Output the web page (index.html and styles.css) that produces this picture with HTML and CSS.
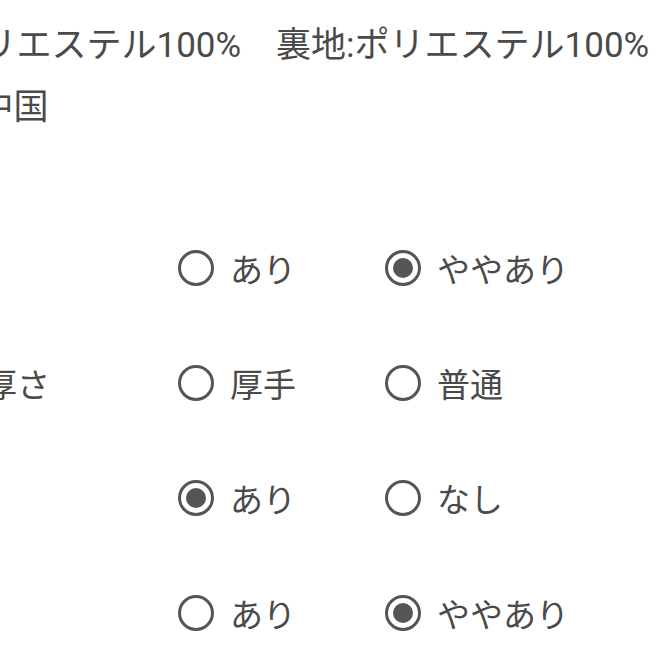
FILE: index.html
```html
<!DOCTYPE html>
<html lang="ja">
<head>
<meta charset="utf-8">
<link rel="stylesheet" href="styles.css">
</head>
<body>
<div class="spec">
  <p class="line line-material">表地:ポリエステル100%　裏地:ポリエステル100%</p>
  <p class="line line-origin">原産国:中国</p>
</div>
<div class="attrs">
  <div class="row">
    <div class="label">透け感</div>
    <div class="opt"><span class="radio"></span><span>あり</span></div>
    <div class="opt"><span class="radio on"></span><span>ややあり</span></div>
    <div class="opt"><span class="radio"></span><span>なし</span></div>
  </div>
  <div class="row">
    <div class="label">生地の厚さ</div>
    <div class="opt"><span class="radio"></span><span>厚手</span></div>
    <div class="opt"><span class="radio"></span><span>普通</span></div>
    <div class="opt"><span class="radio"></span><span>薄手</span></div>
  </div>
  <div class="row">
    <div class="label">伸縮性</div>
    <div class="opt"><span class="radio on"></span><span>あり</span></div>
    <div class="opt"><span class="radio"></span><span>なし</span></div>
  </div>
  <div class="row">
    <div class="label">光沢感</div>
    <div class="opt"><span class="radio"></span><span>あり</span></div>
    <div class="opt"><span class="radio on"></span><span>ややあり</span></div>
    <div class="opt"><span class="radio"></span><span>なし</span></div>
  </div>
</div>
</body>
</html>
```

FILE: styles.css
```css
html, body {
  margin: 0;
  padding: 0;
  background: #ffffff;
  overflow: hidden;
}
body {
  width: 662px;
  height: 662px;
  font-family: "Roboto", "Noto Sans CJK JP", "Noto Sans", sans-serif;
  color: #4a4a4a;
  font-size: 33px;
}
.spec {
  padding-top: 15px;
  font-size: 35px;
}
.line {
  margin: 0;
  line-height: 62px;
  white-space: nowrap;
}
.line-material {
  margin-left: -132px;
}
.line-origin {
  margin-left: -135px;
}
.attrs {
  margin-top: 71px;
  margin-left: -115px;
}
.row {
  display: grid;
  grid-template-columns: 293px 207px 290px 200px;
  align-items: center;
  height: 115px;
  white-space: nowrap;
}
.opt {
  display: flex;
  align-items: center;
  gap: 16px;
}
.radio {
  box-sizing: border-box;
  width: 36px;
  height: 36px;
  border: 3px solid #555555;
  border-radius: 50%;
  display: flex;
  align-items: center;
  justify-content: center;
  flex: none;
}
.radio.on::after {
  content: "";
  width: 20px;
  height: 20px;
  border-radius: 50%;
  background: #555555;
}
```
